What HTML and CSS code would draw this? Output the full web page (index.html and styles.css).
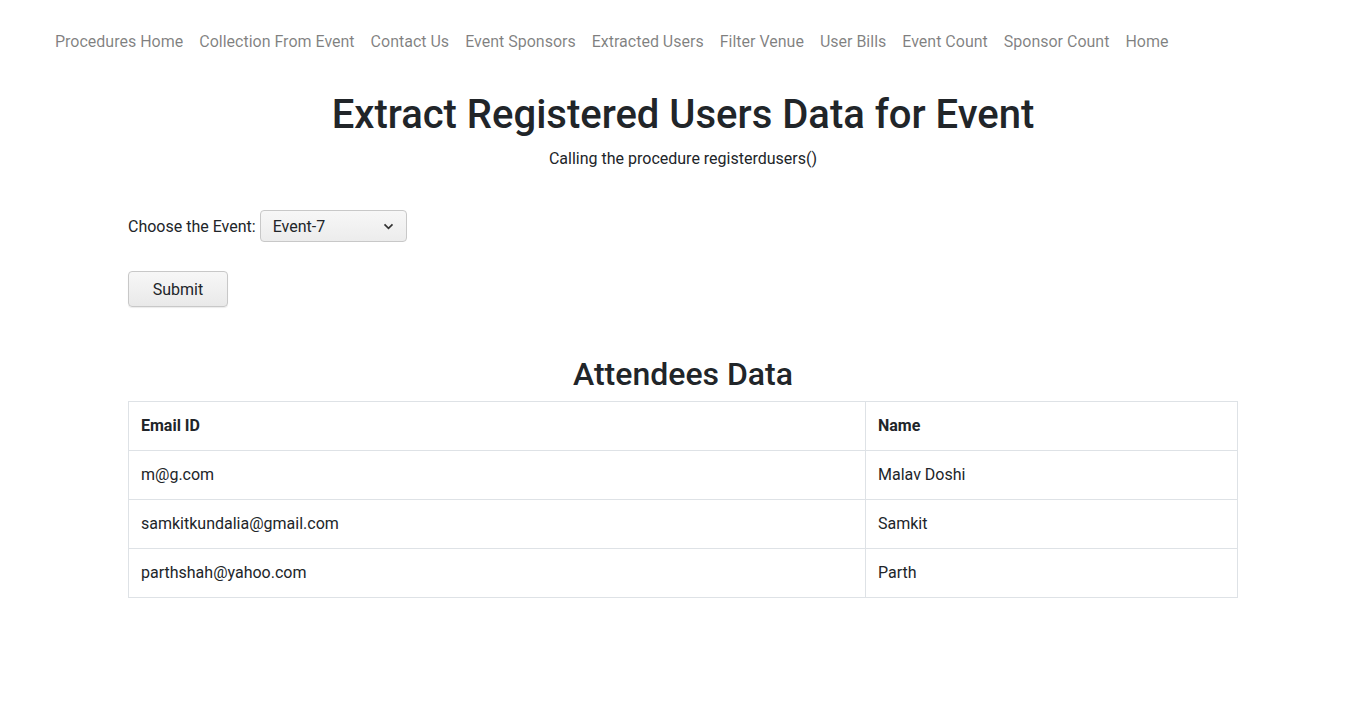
FILE: index.html
```html
<!DOCTYPE html>
<html lang="en">
<head>
<meta charset="utf-8">
<title>Extract Registered Users</title>
<link rel="stylesheet" href="styles.css">
</head>
<body>
<nav class="navbar">
  <ul class="nav-list">
    <li><a class="nav-link" href="#">Procedures Home</a></li>
    <li><a class="nav-link" href="#">Collection From Event</a></li>
    <li><a class="nav-link" href="#">Contact Us</a></li>
    <li><a class="nav-link" href="#">Event Sponsors</a></li>
    <li><a class="nav-link" href="#">Extracted Users</a></li>
    <li><a class="nav-link" href="#">Filter Venue</a></li>
    <li><a class="nav-link" href="#">User Bills</a></li>
    <li><a class="nav-link" href="#">Event Count</a></li>
    <li><a class="nav-link" href="#">Sponsor Count</a></li>
    <li><a class="nav-link" href="#">Home</a></li>
  </ul>
</nav>
<main class="container">
  <h1 class="title">Extract Registered Users Data for Event</h1>
  <p class="subtitle">Calling the procedure registerdusers()</p>
  <form class="event-form">
    <div class="form-row">
      <label class="form-label" for="event">Choose the Event:</label>
      <div class="select-wrap">
        <select id="event" class="select">
          <option>Event-7</option>
        </select>
        <svg class="chev" width="11" height="7" viewBox="0 0 11 7"><path d="M1.5 1.3 L5.5 5.3 L9.5 1.3" fill="none" stroke="#333" stroke-width="1.7"/></svg>
      </div>
    </div>
    <button type="button" class="btn">Submit</button>
  </form>
  <h2 class="section-title">Attendees Data</h2>
  <table class="data-table">
    <thead>
      <tr><th class="col-email">Email ID</th><th>Name</th></tr>
    </thead>
    <tbody>
      <tr><td>m@g.com</td><td>Malav Doshi</td></tr>
      <tr><td>samkitkundalia@gmail.com</td><td>Samkit</td></tr>
      <tr><td>parthshah@yahoo.com</td><td>Parth</td></tr>
    </tbody>
  </table>
</main>
</body>
</html>
```

FILE: styles.css
```css
* { box-sizing: border-box; }
body {
  margin: 0;
  font-family: Roboto, "Liberation Sans", sans-serif;
  font-size: 16px;
  line-height: 1.5;
  color: #212529;
  background: #fff;
}
.navbar {
  padding: 30px 0 0 47px;
}
.nav-list {
  display: flex;
  list-style: none;
  margin: 0;
  padding: 0;
}
.nav-link {
  display: block;
  padding: 0 8px;
  line-height: 24px;
  color: rgba(0,0,0,0.5);
  text-decoration: none;
}
.container {
  width: 1110px;
  margin: 0 auto;
}
.title {
  margin: 37px 0 8px;
  font-size: 40px;
  font-weight: 500;
  line-height: 48px;
  text-align: center;
}
.subtitle {
  margin: 0;
  text-align: center;
  line-height: 24px;
}
.event-form {
  margin-top: 39px;
}
.form-row {
  display: flex;
  align-items: center;
  gap: 4px;
  height: 32px;
}
.form-label {
  line-height: 24px;
  padding-top: 2px;
}
.select-wrap {
  position: relative;
  width: 147px;
  height: 32px;
}
.select {
  appearance: none;
  -webkit-appearance: none;
  width: 100%;
  height: 100%;
  padding: 0 0 0 12px;
  font-family: inherit;
  font-size: 16px;
  color: #212529;
  border: 1px solid #c8c8c8;
  border-radius: 4px;
  background: linear-gradient(#f7f7f7, #ececec);
}
.chev {
  position: absolute;
  right: 13px;
  top: 13px;
  pointer-events: none;
}
.btn {
  display: block;
  margin-top: 29px;
  width: 100px;
  height: 36px;
  font-family: inherit;
  font-size: 16px;
  color: #212529;
  border: 1px solid #c8c8c8;
  border-radius: 4px;
  background: linear-gradient(#f7f7f7, #e9e9e9);
  box-shadow: 0 1px 1px rgba(0,0,0,0.08);
}
.section-title {
  margin: 48px 0 8px;
  font-size: 32px;
  font-weight: 500;
  line-height: 38px;
  text-align: center;
}
.data-table {
  width: 100%;
  border-collapse: collapse;
}
.data-table th,
.data-table td {
  border: 1px solid #dee2e6;
  padding: 12px;
  text-align: left;
  line-height: 24px;
  vertical-align: top;
}
.data-table th {
  font-weight: 700;
}
.col-email {
  width: 737px;
}
```
